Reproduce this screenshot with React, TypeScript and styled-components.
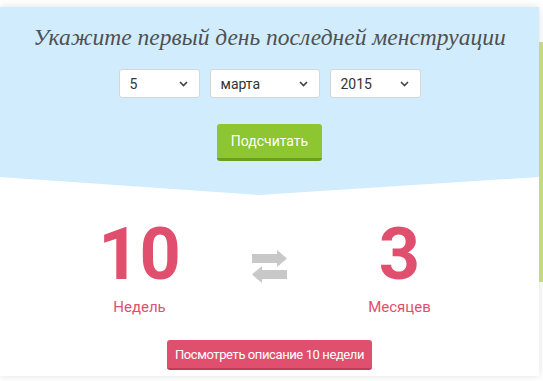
import React from "react";
import styled, { createGlobalStyle } from "styled-components";

const GlobalStyle = createGlobalStyle`
  html, body {
    margin: 0;
    padding: 0;
    background: #ffffff;
  }
  body {
    font-family: Roboto, "Open Sans", sans-serif;
  }
`;

const Chevron = () => (
  <svg width="9" height="6" viewBox="0 0 9 6">
    <polyline points="1,1 4.5,4.5 8,1" fill="none" stroke="#444" strokeWidth="1.6" />
  </svg>
);

const SwapArrows = () => (
  <svg width="35" height="33" viewBox="0 0 35 33">
    <rect x="0" y="4" width="26" height="9" fill="#c8c8c8" />
    <polygon points="25,0 35,8.5 25,17" fill="#c8c8c8" />
    <polygon points="10,16 0,24.5 10,33" fill="#c8c8c8" />
    <rect x="9" y="20" width="26" height="9" fill="#c8c8c8" />
  </svg>
);

const App = () => {
  return (
    <>
      <GlobalStyle />
      <Page>
        <Card>
          <Header>
            <Title>Укажите первый день последней менструации</Title>
            <Selects>
              <Select $w={81}>
                <span>5</span>
                <Chevron />
              </Select>
              <Select $w={110}>
                <span>марта</span>
                <Chevron />
              </Select>
              <Select $w={91}>
                <span>2015</span>
                <Chevron />
              </Select>
            </Selects>
            <CalcButton>Подсчитать</CalcButton>
          </Header>
          <Stats>
            <Stat>
              <Number>10</Number>
              <Label>Недель</Label>
            </Stat>
            <Swap>
              <SwapArrows />
            </Swap>
            <Stat>
              <Number>3</Number>
              <Label>Месяцев</Label>
            </Stat>
          </Stats>
          <Footer>
            <WeekButton>Посмотреть описание 10 недели</WeekButton>
          </Footer>
        </Card>
        <SideStrip />
      </Page>
    </>
  );
};

export default App;

const Page = styled.div`
  display: flex;
  align-items: flex-start;
  padding-top: 7px;
  width: 543px;
  height: 381px;
  box-sizing: border-box;
  overflow: hidden;
`;

const Card = styled.div`
  width: 539px;
  flex-shrink: 0;
  height: 369px;
  background: #ffffff;
  box-shadow: 0 0 8px rgba(0, 0, 0, 0.12);
  display: flex;
  flex-direction: column;
`;

const SideStrip = styled.div`
  width: 4px;
  height: 240px;
  margin-top: 35px;
  background: #c5d981;
  flex-shrink: 0;
`;

const Header = styled.div`
  background: #d0ecfd;
  height: 188px;
  box-sizing: border-box;
  padding-top: 16px;
  display: flex;
  flex-direction: column;
  align-items: center;
  clip-path: polygon(0 0, 100% 0, 100% 170px, 48% 100%, 0 170px);
`;

const Title = styled.h1`
  margin: 0;
  font-family: "Liberation Serif", "DejaVu Serif", serif;
  font-style: italic;
  font-weight: normal;
  font-size: 23.5px;
  line-height: 28px;
  color: #505050;
  white-space: nowrap;
`;

const Selects = styled.div`
  display: flex;
  gap: 10px;
  margin-top: 18px;
`;

const Select = styled.div<{ $w: number }>`
  width: ${(p) => p.$w}px;
  height: 29px;
  box-sizing: border-box;
  background: #ffffff;
  border: 1px solid #d6d6d6;
  border-radius: 3px;
  display: flex;
  align-items: center;
  justify-content: space-between;
  padding: 0 11px 0 10px;
  font-size: 14px;
  color: #333;
`;

const CalcButton = styled.button`
  margin-top: 26px;
  width: 105px;
  height: 37px;
  border: none;
  border-bottom: 3px solid #6c9f1f;
  border-radius: 3px;
  background: #8dc631;
  color: #ffffff;
  font-family: Roboto, sans-serif;
  font-size: 14px;
  padding: 0;
`;

const Stats = styled.div`
  display: grid;
  grid-template-columns: 130px 130px 130px;
  justify-content: center;
  margin-top: 24px;
`;

const Stat = styled.div`
  display: flex;
  flex-direction: column;
  align-items: center;
`;

const Number = styled.div`
  font-family: Roboto, sans-serif;
  font-weight: bold;
  font-size: 72px;
  line-height: 72px;
  color: #e0506e;
`;

const Label = styled.div`
  margin-top: 7px;
  font-size: 15px;
  line-height: 18px;
  color: #e0506e;
`;

const Swap = styled.div`
  display: flex;
  justify-content: center;
  padding-top: 31px;
`;

const Footer = styled.div`
  display: flex;
  justify-content: center;
  margin-top: 24px;
`;

const WeekButton = styled.button`
  width: 205px;
  height: 30px;
  border: none;
  border-bottom: 2px solid #c33a58;
  border-radius: 3px;
  background: #e0506e;
  color: #ffffff;
  font-family: Roboto, sans-serif;
  font-size: 13px;
  letter-spacing: -0.4px;
  padding: 0;
`;
